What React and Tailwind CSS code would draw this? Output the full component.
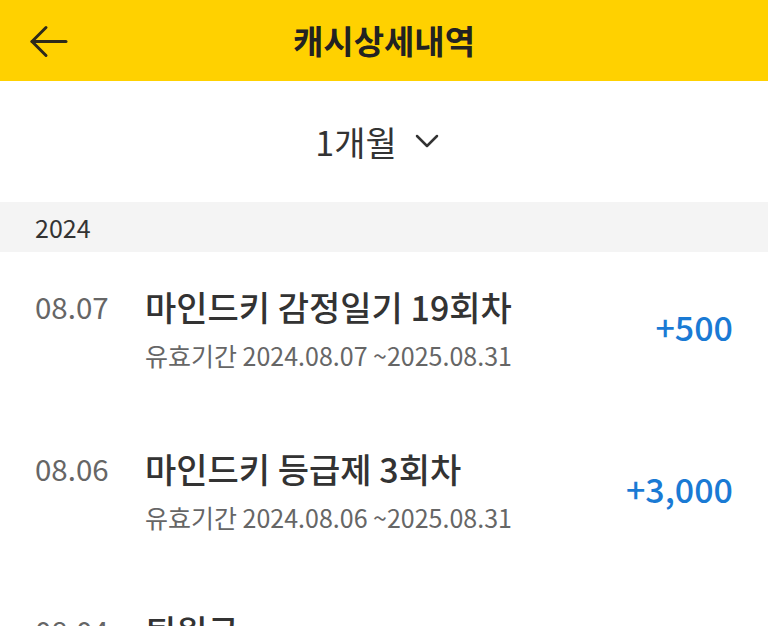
import React from "react";

const items = [
  { date: "08.07", title: "마인드키 감정일기 19회차", sub: "유효기간 2024.08.07 ~2025.08.31", amount: "+500" },
  { date: "08.06", title: "마인드키 등급제 3회차", sub: "유효기간 2024.08.06 ~2025.08.31", amount: "+3,000" },
  { date: "08.04", title: "퇴원금", sub: "유효기간 2024.08.04 ~2025.08.31", amount: "+1,000" },
];

export default function App() {
  return (
    <div
      className="w-[768px] h-[626px] overflow-hidden bg-white"
      style={{ fontFamily: '"Noto Sans CJK KR", "Noto Sans", sans-serif' }}
    >
      <header className="relative h-[81px] bg-[#FFD100] flex items-center justify-center">
        <svg
          className="absolute left-[28px] top-[25px]"
          width="40"
          height="33"
          viewBox="0 0 40 33"
          fill="none"
          stroke="#2e2a1a"
          strokeWidth="3"
          strokeLinecap="round"
          strokeLinejoin="round"
        >
          <path d="M4 16.5 H38" />
          <path d="M18 2.5 L4 16.5 L18 30.5" />
        </svg>
        <h1 className="text-[33px] font-bold text-[#222] leading-none">캐시상세내역</h1>
      </header>

      <div className="h-[121px] flex items-center justify-center gap-[18px] pr-[14px]">
        <span className="text-[34px] font-normal text-[#333] leading-none">1개월</span>
        <svg width="24" height="15" viewBox="0 0 24 15" fill="none" stroke="#333" strokeWidth="2.5" strokeLinecap="round" strokeLinejoin="round">
          <path d="M2 2 L12 12 L22 2" />
        </svg>
      </div>

      <div className="h-[50px] bg-[#f4f4f4] flex items-center px-[35px]">
        <span className="text-[25px] text-[#333] leading-none">2024</span>
      </div>

      {items.map((it) => (
        <div key={it.date} className="flex items-center pt-[36px] pb-[42px] pl-[35px] pr-[35px]">
          <div className="w-[110px] self-start h-[38px] flex items-center">
            <span className="text-[29.5px] text-[#666] leading-none">{it.date}</span>
          </div>
          <div className="flex-1 flex flex-col">
            <div className="h-[38px] flex items-center text-[34px] font-medium text-[#333] leading-none">
              {it.title}
            </div>
            <div className="h-[46px] flex items-center pt-[12px] text-[25px] text-[#666] leading-none">
              {it.sub}
            </div>
          </div>
          <div className="text-[34px] font-medium text-[#1a7ad4] leading-none pb-[6px]">{it.amount}</div>
        </div>
      ))}
    </div>
  );
}
